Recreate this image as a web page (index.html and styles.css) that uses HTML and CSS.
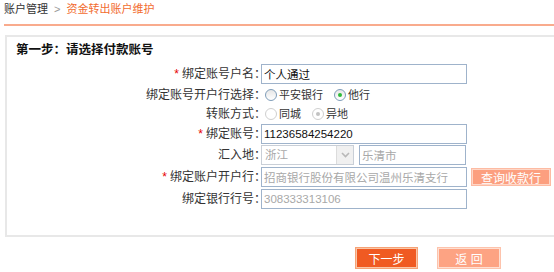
FILE: index.html
```html
<!DOCTYPE html>
<html lang="zh-CN">
<head>
  <meta charset="UTF-8">
  <link rel="stylesheet" href="styles.css">
  <title>资金转出账户维护</title>
</head>
<body>
  <div class="page">
    <div class="crumb">
      <span class="crumb-parent">账户管理</span>
      <span class="crumb-sep">&gt;</span>
      <span class="crumb-current">资金转出账户维护</span>
    </div>

    <div class="panel">
      <h3 class="panel-title">第一步：请选择付款账号</h3>
      <div class="form">
        <div class="label"><span class="req">*</span>绑定账号户名：</div>
        <div class="field"><input class="text" type="text" value="个人通过"></div>

        <div class="label">绑定账号开户行选择：</div>
        <div class="field">
          <label class="choice"><input class="radio" type="radio" name="bank">平安银行</label>
          <label class="choice"><input class="radio" type="radio" name="bank" checked>他行</label>
        </div>

        <div class="label">转账方式：</div>
        <div class="field">
          <label class="choice"><input class="radio" type="radio" name="mode" disabled>同城</label>
          <label class="choice"><input class="radio" type="radio" name="mode" checked disabled>异地</label>
        </div>

        <div class="label"><span class="req">*</span>绑定账号：</div>
        <div class="field"><input class="text" type="text" value="11236584254220"></div>

        <div class="label">汇入地：</div>
        <div class="field">
          <div class="select">
            <span class="select-value">浙江</span>
            <span class="select-arrow">
              <svg width="9" height="6" viewBox="0 0 9 6"><path d="M1 1 L4.5 4.5 L8 1" fill="none" stroke="#b8b8b8" stroke-width="1.6"/></svg>
            </span>
          </div>
          <input class="text text-city" type="text" value="乐清市" disabled>
        </div>

        <div class="label"><span class="req">*</span>绑定账户开户行：</div>
        <div class="field">
          <input class="text" type="text" value="招商银行股份有限公司温州乐清支行" disabled>
          <button class="btn btn-query">查询收款行</button>
        </div>

        <div class="label">绑定银行行号：</div>
        <div class="field"><input class="text" type="text" value="308333313106" disabled></div>
      </div>
    </div>

    <div class="actions">
      <button class="btn btn-primary">下一步</button>
      <button class="btn btn-back">返 回</button>
    </div>
  </div>
</body>
</html>
```

FILE: styles.css
```css
body {
  margin: 0;
  background-color: #ffffff;
  font-family: "Liberation Sans", "Noto Sans CJK SC", sans-serif;
  font-size: 11px;
  color: #333333;
  overflow: hidden;
}

.page {
  width: 580px;
}

.crumb {
  height: 24px;
  line-height: 18px;
  margin-left: 4px;
  border-bottom: 2px solid #f9ab8d;
  white-space: nowrap;
}

.crumb-parent {
  color: #333333;
}

.crumb-sep {
  color: #999999;
  margin: 0 3px;
}

.crumb-current {
  color: #f26c2f;
}

.panel {
  margin: 9px 0 0 5px;
  border: 2px solid #e8e8e8;
  padding: 6px 0 26px 0;
}

.panel-title {
  margin: 0 0 0 9px;
  font-size: 12.5px;
  line-height: 14px;
  font-weight: bold;
  color: #111111;
}

.form {
  display: grid;
  grid-template-columns: 251px 1fr;
  grid-template-rows: 22px 19px 19px 21px 21px 23px 21px;
  column-gap: 3px;
  margin-top: 6px;
}

.label {
  display: flex;
  align-items: center;
  justify-content: flex-end;
  white-space: nowrap;
  font-size: 12px;
  line-height: 14px;
  margin-right: -8px;
}

.req {
  color: #e60000;
  margin-right: 3px;
}

.field {
  display: flex;
  align-items: center;
  gap: 5px;
}

.text {
  box-sizing: border-box;
  width: 206px;
  height: 20px;
  margin: 0;
  padding: 0 2px;
  border: 1px solid #9fb3cb;
  font-family: "Liberation Sans", "Noto Sans CJK SC", sans-serif;
  font-size: 11.5px;
  color: #111111;
  background-color: #ffffff;
}

.text:disabled {
  color: #a8a8a8;
}

.text-city {
  width: 107px;
}

.choice {
  display: flex;
  align-items: center;
  margin-right: 2px;
  font-size: 11px;
  line-height: 14px;
}

.radio {
  appearance: none;
  box-sizing: border-box;
  width: 12px;
  height: 12px;
  margin: 0 2px 0 4px;
  border: 1px solid #7f9db9;
  border-radius: 50%;
  background: linear-gradient(#e6e6e6, #ffffff);
  display: grid;
  place-content: center;
}

.radio:checked::before {
  content: "";
  width: 4px;
  height: 4px;
  border-radius: 50%;
  background-color: #2dbb3a;
}

.radio:disabled {
  border-color: #cfcfcf;
  background: #ffffff;
}

.radio:disabled:checked::before {
  background-color: #c2c2c2;
}

.select {
  box-sizing: border-box;
  display: flex;
  width: 93px;
  height: 20px;
  border: 1px solid #c9cfd7;
  background-color: #ffffff;
}

.select-value {
  flex: 1;
  padding-left: 3px;
  line-height: 18px;
  font-size: 11.5px;
  color: #a8a8a8;
}

.select-arrow {
  width: 16px;
  display: flex;
  align-items: center;
  justify-content: center;
  background-color: #f0f0f0;
  border-left: 1px solid #dcdcdc;
}

.btn {
  box-sizing: border-box;
  margin: 0;
  padding: 0;
  border: 1px solid #f9b08a;
  font-family: "Liberation Sans", "Noto Sans CJK SC", sans-serif;
  font-size: 12px;
  color: #ffffff;
  cursor: pointer;
}

.btn-query {
  width: 80px;
  height: 18px;
  margin-left: -1px;
  background-color: #fc9f7f;
  border-color: #fdbba3;
  box-shadow: inset 0 0 0 1px #fed6c6;
}

.actions {
  display: flex;
  gap: 19px;
  padding: 10px 0 0 355px;
}

.btn-primary {
  width: 63px;
  height: 22px;
  background-color: #f05a22;
  border-color: #f6a276;
  box-shadow: inset 0 0 0 1px #f9c6a8;
}

.btn-back {
  width: 64px;
  height: 22px;
  background-color: #fda383;
  border-color: #fdc3ac;
  box-shadow: inset 0 0 0 1px #fedfd2;
}
```
